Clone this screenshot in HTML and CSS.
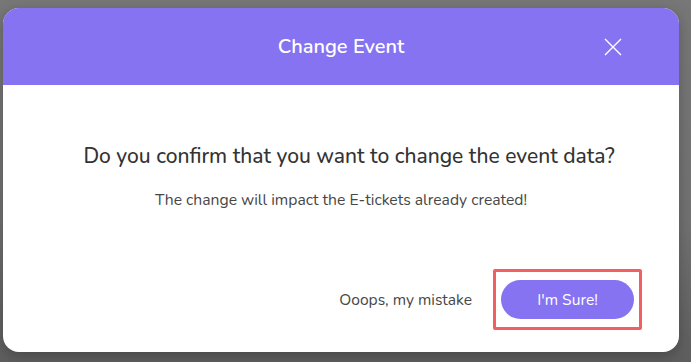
FILE: index.html
```html
<!DOCTYPE html>
<html>
<head>
<meta charset="utf-8">
<link rel="stylesheet" href="styles.css">
</head>
<body>
<div class="backdrop">
  <div class="modal">
    <div class="modal-header">
      <span></span>
      <h2 class="modal-title">Change Event</h2>
      <button class="close" aria-label="Close">
        <svg width="20" height="20" viewBox="0 0 20 20"><path d="M2 2L18 18M18 2L2 18" stroke="#fff" stroke-width="1.4" fill="none"/></svg>
      </button>
    </div>
    <div class="modal-body">
      <h3 class="question">Do you confirm that you want to change the event data?</h3>
      <p class="note">The change will impact the E-tickets already created!</p>
    </div>
    <div class="modal-footer">
      <button class="btn-link">Ooops, my mistake</button>
      <div class="highlight">
        <button class="btn-primary">I'm Sure!</button>
      </div>
    </div>
  </div>
</div>
</body>
</html>
```
FILE: styles.css
```css
html, body {
  margin: 0;
  padding: 0;
  height: 100%;
}
body {
  background: linear-gradient(#777777 0%, #727272 60%, #5e5e5e 100%);
  font-family: "Nunito", "Open Sans", "Noto Sans", sans-serif;
}
.backdrop {
  padding: 8px 12px 10px 3px;
}
.modal {
  width: 676px;
  height: 344px;
  background: #fff;
  border-radius: 16px;
  overflow: hidden;
  display: flex;
  flex-direction: column;
  box-shadow: 0 4px 14px rgba(0,0,0,0.25);
}
.modal-header {
  height: 77px;
  background: #8573f2;
  display: grid;
  grid-template-columns: 1fr auto 1fr;
  align-items: center;
  padding: 0 56px 0 56px;
}
.modal-title {
  margin: 0;
  color: #fff;
  font-size: 20px;
  font-weight: 600;
}
.close {
  justify-self: end;
  background: none;
  border: 0;
  padding: 0;
  width: 20px;
  height: 20px;
  cursor: pointer;
  display: flex;
}
.modal-body {
  display: flex;
  flex-direction: column;
  align-items: center;
  padding: 56px 0 0 0;
}
.question {
  margin: 0;
  padding-left: 16px;
  font-size: 21px;
  font-weight: 500;
  color: #333;
  line-height: 30px;
}
.note {
  margin: 19px 0 0;
  font-size: 15.7px;
  color: #474747;
  line-height: 20px;
}
.modal-footer {
  margin-top: auto;
  display: flex;
  justify-content: flex-end;
  align-items: center;
  gap: 21px;
  padding: 0 37px 22px 0;
}
.btn-link {
  background: none;
  border: 0;
  padding: 0;
  font-family: inherit;
  font-size: 15.6px;
  color: #474747;
}
.highlight {
  border: 3px solid #f25f62;
  border-radius: 2px;
  padding: 8px 5px;
}
.btn-primary {
  display: block;
  width: 133px;
  height: 39px;
  border: 0;
  border-radius: 20px;
  background: #8573f2;
  color: #fff;
  font-family: inherit;
  font-size: 15.6px;
}
```
